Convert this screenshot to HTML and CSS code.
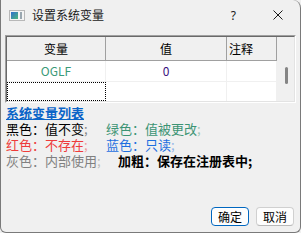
FILE: index.html
```html
<!DOCTYPE html>
<html lang="zh-CN">
<head>
<meta charset="utf-8">
<title>设置系统变量</title>
<link rel="stylesheet" href="styles.css">
</head>
<body>
<div class="window">
  <div class="titlebar">
    <svg class="app-icon" width="16" height="11" viewBox="0 0 16 11">
      <defs>
        <linearGradient id="g" x1="0" y1="0" x2="1" y2="1">
          <stop offset="0" stop-color="#2f6fd0"/>
          <stop offset="1" stop-color="#4cb87a"/>
        </linearGradient>
      </defs>
      <rect x="0.5" y="0.5" width="15" height="10" fill="#f4f4f4" stroke="#b8b8b8"/>
      <rect x="2" y="2" width="7" height="7" fill="url(#g)"/>
      <rect x="11" y="2" width="2" height="7" fill="#9aa7b0"/>
    </svg>
    <span class="title">设置系统变量</span>
    <span class="spacer"></span>
    <span class="help">?</span>
    <svg class="close" width="10" height="10" viewBox="0 0 10 10">
      <path d="M0.5 0.5 L9.5 9.5 M9.5 0.5 L0.5 9.5" stroke="#1a1a1a" stroke-width="1" fill="none"/>
    </svg>
  </div>
  <div class="content">
    <div class="frame">
      <div class="grid">
        <div class="table">
          <div class="row head">
            <div class="cell c1">变量</div>
            <div class="cell c2">值</div>
            <div class="cell c3 left">注释</div>
          </div>
          <div class="row r1">
            <div class="cell c1 green">OGLF</div>
            <div class="cell c2 value">0</div>
            <div class="cell c3"></div>
          </div>
          <div class="row r2">
            <div class="cell c1 focus"></div>
            <div class="cell c2"></div>
            <div class="cell c3"></div>
          </div>
        </div>
        <div class="vscroll"><div class="thumb"></div></div>
      </div>
    </div>
    <div class="legend">
      <div class="link">系统变量列表</div>
      <div class="line">
        <span class="c-a black">黑色：值不变<span class="semi">;</span></span>
        <span class="green">绿色：值被更改<span class="semi">;</span></span>
      </div>
      <div class="line">
        <span class="c-a red">红色：不存在<span class="semi">;</span></span>
        <span class="blue">蓝色：只读<span class="semi">;</span></span>
      </div>
      <div class="line">
        <span class="c-a wide gray">灰色：内部使用<span class="semi">;</span></span>
        <span class="bold">加粗：保存在注册表中;</span>
      </div>
    </div>
    <div class="buttons">
      <button class="btn primary">确定</button>
      <button class="btn">取消</button>
    </div>
  </div>
</div>
</body>
</html>
```
FILE: styles.css
```css
* { box-sizing: border-box; }
html, body {
  margin: 0;
  padding: 0;
  background: #f0f0f0;
}
body {
  font-family: "Noto Sans CJK SC", "Noto Sans", sans-serif;
  color: #000;
}
.window {
  width: 301px;
  height: 233px;
  background: #f0f0f0;
  border-left: 1px solid #7a7a7a;
  border-right: 1px solid #7a7a7a;
  border-bottom: 1px solid #7a7a7a;
  border-top-right-radius: 8px;
  border-bottom-left-radius: 6px;
  border-bottom-right-radius: 6px;
  overflow: hidden;
  display: flex;
  flex-direction: column;
}
.titlebar {
  height: 30px;
  display: flex;
  align-items: center;
  padding-left: 8px;
  font-size: 12px;
  color: #1a1a1a;
}
.app-icon { margin-right: 7px; flex: none; }
.title { line-height: 16px; }
.spacer { flex: 1; }
.help {
  font-family: "Noto Sans", sans-serif;
  font-size: 12px;
  margin-right: 37px;
}
.close { margin-right: 17px; flex: none; }

.content {
  padding: 5px 4px 0 4px;
  display: flex;
  flex-direction: column;
  flex: 1;
}
.frame {
  border: 1px solid;
  border-color: #a0a0a0 #ffffff #ffffff #a0a0a0;
}
.grid {
  display: flex;
  border: 1px solid;
  border-color: #696969 #e3e3e3 #e3e3e3 #696969;
  height: 66px;
}
.table { width: 270px; background: #fff; }
.row { display: flex; }
.cell {
  font-size: 12px;
  text-align: center;
  white-space: nowrap;
  overflow: hidden;
}
.c1 { width: 99px; }
.c2 { width: 121px; }
.c3 { width: 50px; }
.left { text-align: left; padding-left: 2px; }
.head {
  height: 24px;
  background: #f0f0f0;
  border-bottom: 1px solid #a0a0a0;
}
.head .cell {
  border-right: 1px solid #a0a0a0;
  line-height: 23px;
}
.r1 { height: 21px; border-bottom: 1px solid #f0f0f0; }
.r1 .cell, .r2 .cell {
  border-right: 1px solid #f0f0f0;
  line-height: 20px;
}
.r2 { height: 19px; }
.r1 .green { color: #3a9a78; }
.value { color: #3a1080; }
.focus { border: 1px dotted #000; border-right: 1px dotted #000 !important; }
.vscroll {
  flex: 1;
  background: #f0f0f0;
  position: relative;
}
.thumb {
  position: absolute;
  left: 8px;
  top: 30px;
  width: 3px;
  height: 17px;
  border-radius: 2px;
  background: #858585;
}

.legend {
  margin-top: 2px;
  padding-left: 1px;
  font-size: 13px;
  line-height: 16px;
}
.link {
  color: #0a64c8;
  font-weight: bold;
  text-decoration: underline;
}
.line { display: flex; white-space: nowrap; }
.c-a { width: 100px; flex: none; }
.c-a.wide { width: 112px; }
.black { color: #000; }
.green { color: #3c9474; }
.red { color: #ee3b3b; }
.blue { color: #1d6fe0; }
.gray { color: #808080; }
.bold { font-weight: bold; color: #000; }
.semi { opacity: 0.45; }

.buttons {
  margin-top: auto;
  margin-bottom: 6px;
  display: flex;
  justify-content: flex-end;
  gap: 7px;
  padding-right: 2px;
}
.btn {
  width: 38px;
  height: 19px;
  padding: 0;
  font-family: "Noto Sans CJK SC", sans-serif;
  font-size: 12px;
  line-height: 17px;
  color: #000;
  background: #fdfdfd;
  border: 1px solid #d0d0d0;
  border-bottom-color: #b8b8b8;
  border-radius: 4px;
}
.btn.primary {
  border: 1px solid #0067c0;
  box-shadow: inset 0 0 0 1px #ffffff;
}
```
